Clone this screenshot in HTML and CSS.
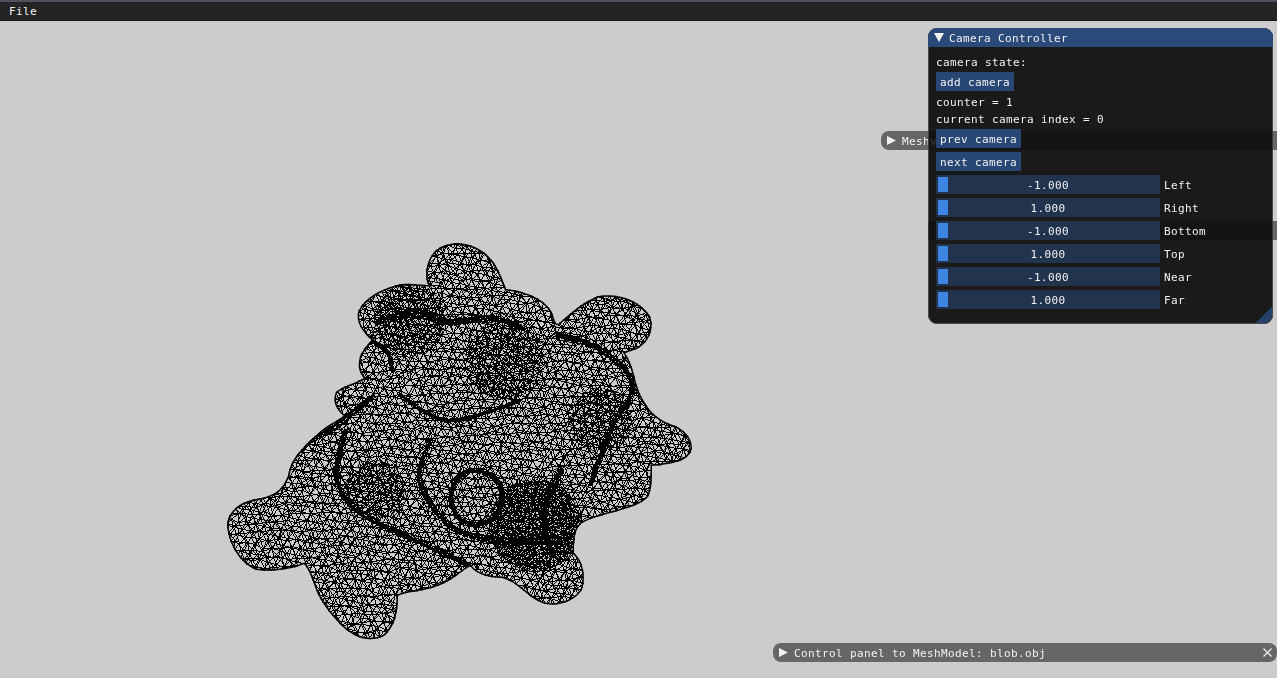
FILE: index.html
```html
<!DOCTYPE html>
<html lang="en">
<head>
<meta charset="utf-8">
<title>Mesh Viewer</title>
<link rel="stylesheet" href="styles.css">
</head>
<body>
<header class="menubar"><span class="menu-item">File</span></header>

<canvas class="mesh" id="mesh" width="1277" height="678"></canvas>

<section class="window mesh-window collapsed-bar">
  <svg class="arrow" width="9" height="9" viewBox="0 0 9 9"><path d="M0 0L9 4.5L0 9Z"/></svg>
  <span class="bar-text">Mesh</span>
</section>

<section class="window camera-window">
  <div class="camera-title">
    <svg class="arrow" width="10" height="9" viewBox="0 0 10 9"><path d="M0 0H10L5 9Z"/></svg>
    <span class="bar-text">Camera Controller</span>
  </div>
  <div class="camera-body">
    <div class="ghost ghost-mesh"><span>view</span></div>
    <div class="ghost ghost-hello"><span>&#9654; Hello, wor</span></div>
    <div class="line">camera state:</div>
    <div class="btn">add camera</div>
    <div class="line">counter = 1</div>
    <div class="line">current camera index = 0</div>
    <div class="btn">prev camera</div>
    <div class="btn">next camera</div>
    <div class="slider-row"><div class="slider"><i class="grab"></i><span>-1.000</span></div><label>Left</label></div>
    <div class="slider-row"><div class="slider"><i class="grab"></i><span>1.000</span></div><label>Right</label></div>
    <div class="slider-row"><div class="slider"><i class="grab"></i><span>-1.000</span></div><label>Bottom</label></div>
    <div class="slider-row"><div class="slider"><i class="grab"></i><span>1.000</span></div><label>Top</label></div>
    <div class="slider-row"><div class="slider"><i class="grab"></i><span>-1.000</span></div><label>Near</label></div>
    <div class="slider-row"><div class="slider"><i class="grab"></i><span>1.000</span></div><label>Far</label></div>
    <i class="resize-grip"></i>
  </div>
</section>

<div class="edge-bar edge-mesh"></div>
<div class="edge-bar edge-hello"></div>

<section class="window panel-window collapsed-bar">
  <svg class="arrow" width="9" height="9" viewBox="0 0 9 9"><path d="M0 0L9 4.5L0 9Z"/></svg>
  <span class="bar-text panel-title">Control panel to MeshModel: blob.obj</span>
  <svg class="close" width="9" height="9" viewBox="0 0 9 9"><path d="M0.5 0.5L8.5 8.5M8.5 0.5L0.5 8.5"/></svg>
</section>
<script src="mesh.js"></script>
</body>
</html>
```

FILE: styles.css
```css
* { box-sizing: border-box; }
html, body { margin: 0; height: 678px; overflow: hidden; }
body {
  position: relative;
  background: #cccccc;
  color: #f2f2f2;
  font-family: "DejaVu Sans Mono", "Liberation Mono", monospace;
  font-size: 11px;
  letter-spacing: 0.38px;
}
.menubar {
  height: 21px;
  background: #242424;
  border-top: 2px solid #50505c;
  border-bottom: 1px solid #1a1a1e;
  display: flex;
  align-items: center;
  padding-left: 9px;
}
.menu-item { line-height: 20px; padding-top: 2px; }
.mesh { position: absolute; left: 0; top: 0; }
.window { position: absolute; }
.arrow { fill: #f2f2f2; flex: none; }
.bar-text { line-height: 20px; padding-top: 2px; }
.collapsed-bar {
  height: 19px;
  background: #666666;
  display: flex;
  align-items: center;
  border-radius: 8px 0 0 8px;
}
.mesh-window { left: 881px; top: 131px; width: 396px; padding-left: 6px; gap: 6px; }
.camera-window {
  left: 928px; top: 28px; width: 345px; height: 296px;
  border-radius: 9px;
  overflow: hidden;
  background: #1a1a1a;
  box-shadow: inset 0 0 0 1px #4a4a50;
  display: flex;
  flex-direction: column;
}
.camera-title {
  height: 19px;
  flex: none;
  background: #2a4a7a;
  display: flex;
  align-items: center;
  gap: 5px;
  padding-left: 6px;
}
.camera-body {
  position: relative;
  flex: 1;
  display: flex;
  flex-direction: column;
  align-items: flex-start;
  gap: 4px;
  padding: 8px;
}
.camera-body > .line, .camera-body > .btn, .camera-body > .slider-row { position: relative; z-index: 1; }
.line { height: 13px; line-height: 15px; }
.btn {
  height: 19px;
  line-height: 21px;
  padding: 0 4px;
  background: rgba(41, 74, 122, 0.95);
}
.slider-row { display: flex; align-items: center; gap: 4px; height: 19px; line-height: 21px; }
.slider-row label { padding-top: 2px; }
.slider {
  position: relative;
  width: 224px;
  height: 19px;
  text-align: center;
  background: rgba(36, 54, 82, 0.93);
}
.slider span { position: relative; }
.grab {
  position: absolute;
  left: 2px; top: 2px;
  width: 10px; height: 15px;
  background: #3d85e0;
}
.ghost {
  position: absolute;
  left: 0; right: 0;
  height: 19px;
  line-height: 21px;
  background: rgba(0, 0, 0, 0.22);
  color: rgba(255, 255, 255, 0.16);
}
.ghost-mesh { top: 84px; }
.ghost-mesh span { margin-left: 2px; }
.ghost-hello { top: 174px; color: rgba(255, 255, 255, 0.14); }
.ghost-hello span { margin-left: 16px; }
.resize-grip {
  position: absolute;
  right: 1px; bottom: 1px;
  width: 16px; height: 16px;
  background: linear-gradient(135deg, transparent 50%, #26406a 50%);
  border-bottom-right-radius: 8px;
}
.edge-bar { position: absolute; left: 1273px; width: 4px; height: 19px; background: #666666; }
.edge-mesh { top: 131px; }
.edge-hello { top: 221px; }
.panel-window {
  left: 773px; top: 643px; width: 504px;
  padding-left: 6px;
  gap: 6px;
  border-radius: 8px;
}
.panel-title { flex: 1; }
.close { fill: none; stroke: #f2f2f2; stroke-width: 1.2; margin-right: 5px; flex: none; }
```

FILE: mesh.js
```js
(function () {
  var ctx = document.getElementById('mesh').getContext('2d');
  ctx.fillStyle = '#000';
  ctx.strokeStyle = '#000';
  var seed = 12345;
  function rnd() { seed = (seed * 16807) % 2147483647; return seed / 2147483647; }

  var outline = new Path2D('M458 243C474 244 488 252 496 266C502 277 504 284 506 289C526 291 548 300 553 315C554 320 556 324 558 324C568 316 580 303 598 296C618 293 640 300 650 316C655 330 648 345 634 350L625 353C634 366 634 380 640 394C648 410 655 418 670 424C684 428 692 438 692 448C690 460 676 464 652 466C652 478 652 490 648 497C636 510 604 512 584 522C576 526 574 534 574 553C584 562 586 578 582 590C572 604 552 608 540 602C526 596 518 582 502 578C488 578 476 574 470 566C460 572 452 582 432 588C418 592 404 592 398 596C398 610 396 626 384 636C368 644 352 636 342 626C328 612 318 598 314 584C310 572 306 566 304 564C292 570 268 572 256 570C238 562 228 542 227 524C230 506 246 500 262 498C276 494 282 490 288 476C290 458 306 444 322 430C330 424 338 420 344 416C336 410 332 400 336 392C342 386 354 384 364 378C358 372 358 364 360 356C364 348 368 344 372 340C362 332 356 322 358 312C364 298 382 288 402 284C412 283 420 285 428 285C424 274 426 260 436 250C444 245 450 243 458 243Z');

  function line(x0, y0, x1, y1) {
    x0 = Math.round(x0); y0 = Math.round(y0); x1 = Math.round(x1); y1 = Math.round(y1);
    var dx = Math.abs(x1 - x0), dy = -Math.abs(y1 - y0);
    var sx = x0 < x1 ? 1 : -1, sy = y0 < y1 ? 1 : -1, err = dx + dy;
    for (;;) {
      ctx.fillRect(x0, y0, 1, 1);
      if (x0 === x1 && y0 === y1) break;
      var e2 = 2 * err;
      if (e2 >= dy) { err += dy; x0 += sx; }
      if (e2 <= dx) { err += dx; y0 += sy; }
    }
  }

  ctx.save();
  ctx.clip(outline);

  // Jittered sheets of triangles, laid over one another at different angles.
  function sheet(sp, jitter, angle) {
    var h = sp * 0.866, size = 640, rows = Math.ceil(size / h), cols = Math.ceil(size / sp), grid = [], r, c;
    var co = Math.cos(angle), si = Math.sin(angle);
    for (r = 0; r < rows; r++) {
      grid[r] = [];
      for (c = 0; c < cols; c++) {
        var u = c * sp + (r % 2) * sp / 2 + (rnd() - 0.5) * jitter - size / 2;
        var v = r * h + (rnd() - 0.5) * jitter - size / 2;
        grid[r][c] = [460 + u * co - v * si, 440 + u * si + v * co];
      }
    }
    for (r = 0; r < rows - 1; r++) {
      for (c = 0; c < cols - 1; c++) {
        var a = grid[r][c], d = r % 2 ? grid[r + 1][c + 1] : grid[r + 1][c > 0 ? c - 1 : c];
        line(a[0], a[1], grid[r][c + 1][0], grid[r][c + 1][1]);
        line(a[0], a[1], grid[r + 1][c][0], grid[r + 1][c][1]);
        line(a[0], a[1], d[0], d[1]);
      }
    }
  }
  sheet(8, 3, 0.2);
  sheet(10, 4, 1.0);

  // Pockets where more of the surface overlaps: extra small sheets clipped to discs.
  function pocket(x, y, r, sp, angle) {
    ctx.save();
    ctx.beginPath();
    ctx.arc(x, y, r, 0, 6.29);
    ctx.clip();
    sheet(sp, 2, angle);
    ctx.restore();
  }
  pocket(535, 525, 46, 4, 0.5);
  pocket(510, 590, 0, 4, 0.5);
  pocket(505, 360, 40, 7, 0.7);
  pocket(410, 320, 36, 7, 1.3);
  pocket(375, 490, 30, 7, 0.4);
  pocket(600, 420, 32, 7, 1.5);

  // Folds of the surface, where the mesh packs into dark ridges. Each fold is a
  // smooth curve through [x, y, width] points.
  function curve(f, u) {
    var n = f.length - 1, k = Math.min(Math.floor(u * n), n - 1), w = u * n - k;
    var p0 = f[Math.max(k - 1, 0)], p1 = f[k], p2 = f[k + 1], p3 = f[Math.min(k + 2, n)];
    return [0, 1, 2].map(function (i) {
      return 0.5 * (2 * p1[i] + (p2[i] - p0[i]) * w +
        (2 * p0[i] - 5 * p1[i] + 4 * p2[i] - p3[i]) * w * w +
        (3 * p1[i] - p0[i] - 3 * p2[i] + p3[i]) * w * w * w);
    });
  }
  var folds = [
    [[300,445,5],[335,425,7],[372,396,5]],
    [[376,322,6],[420,312,8],[445,322,6],[490,318,5],[520,326,3]],
    [[366,338,4],[388,352,6],[392,370,4]],
    [[345,430,4],[336,475,5],[350,505,6],[380,525,6],[425,545,6],[468,566,5]],
    [[430,440,3],[420,480,5],[450,525,5],[500,540,7],[565,540,7]],
    [[555,335,7],[600,350,6],[632,385,5],[610,430,5],[590,485,4]],
    [[400,395,3],[450,420,3],[520,400,3]],
    [[560,470,6],[542,510,9],[550,555,7]],
    [[450,497,3],[457,478,3],[475,470,3],[495,478,4],[502,497,4],[495,516,4],[475,524,4],[457,516,3],[450,497,3]]
  ];
  folds.forEach(function (f) {
    for (var k = 0; k < 10; k++) {
      var ox = rnd() - 0.5, oy = rnd() - 0.5, n = 14 * (f.length - 1);
      for (var q = 0; q < n; q++) {
        var a = curve(f, q / n), b = curve(f, (q + 1) / n);
        line(a[0] + ox * a[2] + (rnd() - 0.5) * 2, a[1] + oy * a[2] + (rnd() - 0.5) * 2,
             b[0] + ox * b[2] + (rnd() - 0.5) * 2, b[1] + oy * b[2] + (rnd() - 0.5) * 2);
      }
    }
  });

  // Rim of the shape: the mesh turns edge-on here and reads nearly solid.
  ctx.lineWidth = 3;
  ctx.stroke(outline);
  ctx.restore();
})();
```
